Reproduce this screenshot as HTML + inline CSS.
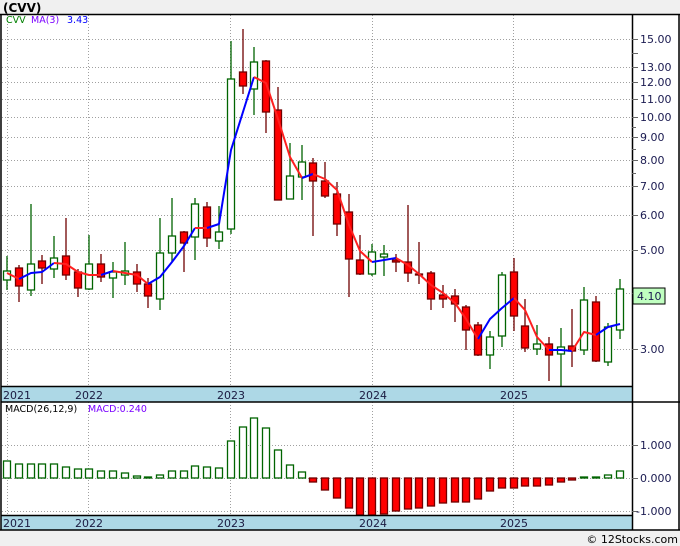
<!DOCTYPE html>
<html><head><meta charset="utf-8"><style>
html,body{margin:0;padding:0;background:#f0f0f0;}
svg{display:block;font-family:"DejaVu Sans","Liberation Sans",sans-serif;}
</style></head><body>
<svg width="680" height="546" viewBox="0 0 680 546" xmlns="http://www.w3.org/2000/svg">
<rect x="0" y="0" width="680" height="546" fill="#f0f0f0"/>
<rect x="1" y="14" width="678" height="516" fill="#fff"/>
<text x="3" y="12" font-size="12" font-weight="bold" fill="#000">(CVV)</text>
<!-- grid -->
<g stroke="#a0a0a0" stroke-dasharray="1,2" stroke-width="1">
<line x1="2" y1="39.5" x2="632" y2="39.5"/><line x1="2" y1="67.5" x2="632" y2="67.5"/><line x1="2" y1="82.5" x2="632" y2="82.5"/>
<line x1="2" y1="99.5" x2="632" y2="99.5"/><line x1="2" y1="117.5" x2="632" y2="117.5"/><line x1="2" y1="137.5" x2="632" y2="137.5"/>
<line x1="2" y1="160.5" x2="632" y2="160.5"/><line x1="2" y1="186.5" x2="632" y2="186.5"/><line x1="2" y1="215.5" x2="632" y2="215.5"/>
<line x1="2" y1="250.5" x2="632" y2="250.5"/><line x1="2" y1="293.5" x2="632" y2="293.5"/><line x1="2" y1="349.5" x2="632" y2="349.5"/>
<line x1="2" y1="445.5" x2="632" y2="445.5"/><line x1="2" y1="478.5" x2="632" y2="478.5"/><line x1="2" y1="511.5" x2="632" y2="511.5"/>
<line x1="7.5" y1="15" x2="7.5" y2="515"/><line x1="88.5" y1="15" x2="88.5" y2="515"/><line x1="230.5" y1="15" x2="230.5" y2="515"/>
<line x1="372.5" y1="15" x2="372.5" y2="515"/><line x1="513.5" y1="15" x2="513.5" y2="515"/>
</g>
<!-- wicks -->
<g stroke-width="1.3">
<g stroke="#006400">
<line x1="7" y1="256" x2="7" y2="290"/><line x1="31" y1="204" x2="31" y2="296"/><line x1="54" y1="236" x2="54" y2="278"/>
<line x1="89" y1="235" x2="89" y2="290"/><line x1="113" y1="262" x2="113" y2="298"/><line x1="125" y1="242" x2="125" y2="285"/>
<line x1="160" y1="218" x2="160" y2="310"/><line x1="172" y1="198" x2="172" y2="262"/><line x1="195" y1="198" x2="195" y2="260"/>
<line x1="219" y1="206" x2="219" y2="249"/><line x1="231" y1="41" x2="231" y2="234"/><line x1="254" y1="47" x2="254" y2="115"/>
<line x1="290" y1="143" x2="290" y2="199"/><line x1="302" y1="145" x2="302" y2="200"/><line x1="372" y1="244" x2="372" y2="276"/>
<line x1="384" y1="245" x2="384" y2="276"/><line x1="490" y1="331" x2="490" y2="369"/><line x1="502" y1="272" x2="502" y2="347"/>
<line x1="537" y1="325" x2="537" y2="355"/><line x1="561" y1="328" x2="561" y2="388"/><line x1="584" y1="287" x2="584" y2="355"/>
<line x1="608" y1="323" x2="608" y2="366"/><line x1="620" y1="279" x2="620" y2="339"/>
</g>
<g stroke="#700000">
<line x1="19" y1="265" x2="19" y2="302"/><line x1="42" y1="255" x2="42" y2="284"/><line x1="66" y1="218" x2="66" y2="280"/>
<line x1="78" y1="269" x2="78" y2="297"/><line x1="101" y1="254" x2="101" y2="282"/><line x1="137" y1="264" x2="137" y2="292"/>
<line x1="148" y1="278" x2="148" y2="308"/><line x1="184" y1="231" x2="184" y2="272"/><line x1="207" y1="202" x2="207" y2="247"/>
<line x1="243" y1="29" x2="243" y2="94"/><line x1="266" y1="60" x2="266" y2="133"/><line x1="278" y1="87" x2="278" y2="200"/>
<line x1="313" y1="158" x2="313" y2="236"/><line x1="325" y1="162" x2="325" y2="198"/><line x1="337" y1="182" x2="337" y2="236"/>
<line x1="349" y1="194" x2="349" y2="297"/><line x1="360" y1="235" x2="360" y2="275"/><line x1="396" y1="254" x2="396" y2="272"/>
<line x1="408" y1="205" x2="408" y2="282"/><line x1="419" y1="242" x2="419" y2="284"/><line x1="431" y1="271" x2="431" y2="310"/>
<line x1="443" y1="285" x2="443" y2="308"/><line x1="455" y1="289" x2="455" y2="322"/><line x1="466" y1="305" x2="466" y2="350"/>
<line x1="478" y1="322" x2="478" y2="356"/><line x1="514" y1="258" x2="514" y2="331"/><line x1="525" y1="299" x2="525" y2="352"/>
<line x1="549" y1="337" x2="549" y2="381"/><line x1="572" y1="309" x2="572" y2="367"/><line x1="596" y1="296" x2="596" y2="362"/>
</g></g>
<!-- up bodies -->
<g fill="#fff" stroke="#006400" stroke-width="1.3">
<rect x="3.5" y="271" width="7" height="9"/><rect x="27.5" y="264" width="7" height="26"/><rect x="50.5" y="258" width="7" height="11"/>
<rect x="85.5" y="264" width="7" height="25"/><rect x="109.5" y="272" width="7" height="6"/><rect x="121.5" y="271" width="7" height="4"/>
<rect x="156.5" y="253" width="7" height="46"/><rect x="168.5" y="236" width="7" height="17"/><rect x="191.5" y="204" width="7" height="33"/>
<rect x="215.5" y="232" width="7" height="9"/><rect x="227.5" y="79" width="7" height="150"/><rect x="250.5" y="62" width="7" height="27"/>
<rect x="286.5" y="176" width="7" height="23"/><rect x="298.5" y="162" width="7" height="15"/><rect x="368.5" y="252" width="7" height="22"/>
<rect x="380.5" y="254" width="7" height="3"/><rect x="486.5" y="337" width="7" height="18"/><rect x="498.5" y="275" width="7" height="61"/>
<rect x="533.5" y="344" width="7" height="5"/><rect x="557.5" y="347" width="7" height="7"/><rect x="580.5" y="300" width="7" height="50"/>
<rect x="604.5" y="327" width="7" height="35"/><rect x="616.5" y="289" width="7" height="41"/>
</g>
<!-- down bodies -->
<g fill="#ff0000" stroke="#700000" stroke-width="1.3">
<rect x="15.5" y="268" width="7" height="18"/><rect x="38.5" y="261" width="7" height="7"/><rect x="62.5" y="256" width="7" height="19"/>
<rect x="74.5" y="272" width="7" height="16"/><rect x="97.5" y="264" width="7" height="13"/><rect x="133.5" y="272" width="7" height="12"/>
<rect x="144.5" y="284" width="7" height="12"/><rect x="180.5" y="232" width="7" height="11"/><rect x="203.5" y="207" width="7" height="31"/>
<rect x="239.5" y="72" width="7" height="14"/><rect x="262.5" y="61" width="7" height="51"/><rect x="274.5" y="110" width="7" height="90"/>
<rect x="309.5" y="163" width="7" height="18"/><rect x="321.5" y="181" width="7" height="15"/><rect x="333.5" y="194" width="7" height="30"/>
<rect x="345.5" y="212" width="7" height="47"/><rect x="356.5" y="260" width="7" height="14"/><rect x="392.5" y="260" width="7" height="2"/>
<rect x="404.5" y="262" width="7" height="11"/><rect x="415.5" y="274" width="7" height="1"/><rect x="427.5" y="273" width="7" height="26"/>
<rect x="439.5" y="295" width="7" height="4"/><rect x="451.5" y="296" width="7" height="8"/><rect x="462.5" y="307" width="7" height="23"/>
<rect x="474.5" y="325" width="7" height="30"/><rect x="510.5" y="272" width="7" height="44"/><rect x="521.5" y="326" width="7" height="22"/>
<rect x="545.5" y="344" width="7" height="11"/><rect x="568.5" y="346" width="7" height="5"/><rect x="592.5" y="302" width="7" height="59"/>
</g>
<!-- MA line -->
<g fill="none" stroke-width="2" stroke-linejoin="round">
<polyline stroke="#ff2020" points="7,273 19,279"/>
<polyline stroke="#0000ff" points="19,279 31,273 42,272 54,263"/>
<polyline stroke="#ff2020" points="54,263 66,264 78,272 89,275 101,275"/>
<polyline stroke="#0000ff" points="101,275 113,271"/>
<polyline stroke="#ff2020" points="113,271 125,273 137,275 148,284"/>
<polyline stroke="#0000ff" points="148,284 160,277 172,262 184,246 195,228"/>
<polyline stroke="#ff2020" points="195,228 207,228"/>
<polyline stroke="#0000ff" points="207,228 219,224 231,150 254,77"/>
<polyline stroke="#ff2020" points="254,77 266,83 278,119 290,157 302,178"/>
<polyline stroke="#0000ff" points="302,178 313,174"/>
<polyline stroke="#ff2020" points="313,174 325,179 337,190 349,225 360,251 372,262"/>
<polyline stroke="#0000ff" points="372,262 384,260 396,258"/>
<polyline stroke="#ff2020" points="396,258 408,265 419,274 431,285 443,293 455,303 466,319 478,339"/>
<polyline stroke="#0000ff" points="478,339 490,319 502,308 514,298"/>
<polyline stroke="#ff2020" points="514,298 525,310 537,337 549,350"/>
<polyline stroke="#0000ff" points="549,350 561,350 572,351"/>
<polyline stroke="#ff2020" points="572,351 584,332 596,335"/>
<polyline stroke="#0000ff" points="596,335 608,327 620,324"/>
</g>
<text x="6" y="23" font-size="9.5" fill="#008000">CVV</text>
<text x="31" y="23" font-size="9.5" fill="#7a00ff">MA(3)</text>
<text x="67" y="23" font-size="9.5" fill="#0000ff">3.43</text>
<!-- MACD bars -->
<g fill="#fff" stroke="#006400" stroke-width="1.3">
<rect x="3.5" y="461" width="7" height="17"/><rect x="15.5" y="464" width="7" height="14"/><rect x="27.5" y="464" width="7" height="14"/>
<rect x="38.5" y="464" width="7" height="14"/><rect x="50.5" y="464" width="7" height="14"/><rect x="62.5" y="467" width="7" height="11"/>
<rect x="74.5" y="469" width="7" height="9"/><rect x="85.5" y="469" width="7" height="9"/><rect x="97.5" y="471" width="7" height="7"/>
<rect x="109.5" y="471" width="7" height="7"/><rect x="121.5" y="473" width="7" height="5"/><rect x="133.5" y="476" width="7" height="2"/>
<rect x="144.5" y="477" width="7" height="1"/><rect x="156.5" y="475" width="7" height="3"/><rect x="168.5" y="471" width="7" height="7"/>
<rect x="180.5" y="471" width="7" height="7"/><rect x="191.5" y="466" width="7" height="12"/><rect x="203.5" y="467" width="7" height="11"/>
<rect x="215.5" y="468" width="7" height="10"/><rect x="227.5" y="441" width="7" height="37"/><rect x="239.5" y="427" width="7" height="51"/>
<rect x="250.5" y="418" width="7" height="60"/><rect x="262.5" y="428" width="7" height="50"/><rect x="274.5" y="450" width="7" height="28"/>
<rect x="286.5" y="465" width="7" height="13"/><rect x="298.5" y="472" width="7" height="6"/>
<rect x="580.5" y="477" width="7" height="1"/><rect x="592.5" y="477" width="7" height="1"/><rect x="604.5" y="475" width="7" height="3"/>
<rect x="616.5" y="471" width="7" height="7"/>
</g>
<g fill="#ff0000" stroke="#700000" stroke-width="1.3">
<rect x="309.5" y="478" width="7" height="4"/><rect x="321.5" y="478" width="7" height="12"/><rect x="333.5" y="478" width="7" height="20"/>
<rect x="345.5" y="478" width="7" height="30"/><rect x="356.5" y="478" width="7" height="37"/><rect x="368.5" y="478" width="7" height="37"/>
<rect x="380.5" y="478" width="7" height="36"/><rect x="392.5" y="478" width="7" height="33"/><rect x="404.5" y="478" width="7" height="31"/>
<rect x="415.5" y="478" width="7" height="30"/><rect x="427.5" y="478" width="7" height="28"/><rect x="439.5" y="478" width="7" height="25"/>
<rect x="451.5" y="478" width="7" height="24"/><rect x="462.5" y="478" width="7" height="24"/><rect x="474.5" y="478" width="7" height="21"/>
<rect x="486.5" y="478" width="7" height="13"/><rect x="498.5" y="478" width="7" height="10"/><rect x="510.5" y="478" width="7" height="10"/>
<rect x="521.5" y="478" width="7" height="8"/><rect x="533.5" y="478" width="7" height="8"/><rect x="545.5" y="478" width="7" height="7"/>
<rect x="557.5" y="478" width="7" height="4"/><rect x="568.5" y="478" width="7" height="2"/>
</g>
<text x="5" y="412" font-size="9.5" fill="#000">MACD(26,12,9)</text>
<text x="88" y="412" font-size="9.5" fill="#7a00ff">MACD:0.240</text>
<!-- axis strips -->
<rect x="1" y="386" width="631" height="16" fill="#add8e6"/>
<rect x="1" y="515" width="631" height="15" fill="#add8e6"/>
<g stroke="#000" stroke-width="1.5">
<line x1="0" y1="14.5" x2="680" y2="14.5"/><line x1="1" y1="14" x2="1" y2="530"/><line x1="679" y1="14" x2="679" y2="530"/>
<line x1="632.5" y1="14" x2="632.5" y2="530"/><line x1="1" y1="386.5" x2="632" y2="386.5"/><line x1="1" y1="402" x2="680" y2="402"/>
<line x1="1" y1="515.5" x2="632" y2="515.5"/><line x1="0" y1="530" x2="680" y2="530"/>
</g>
<g font-size="11" fill="#1a1a40">
<text x="3" y="399">2021</text><text x="75" y="399">2022</text><text x="217" y="399">2023</text><text x="359" y="399">2024</text><text x="500" y="399">2025</text>
<text x="3" y="527">2021</text><text x="75" y="527">2022</text><text x="217" y="527">2023</text><text x="359" y="527">2024</text><text x="500" y="527">2025</text>
</g>
<!-- right axis -->
<g stroke="#666" stroke-width="1">
<line x1="632" y1="39.5" x2="638" y2="39.5"/><line x1="632" y1="53.5" x2="638" y2="53.5"/><line x1="632" y1="67.5" x2="638" y2="67.5"/>
<line x1="632" y1="82.5" x2="638" y2="82.5"/><line x1="632" y1="99.5" x2="638" y2="99.5"/><line x1="632" y1="117.5" x2="638" y2="117.5"/>
<line x1="632" y1="127.5" x2="636" y2="127.5"/><line x1="632" y1="137.5" x2="638" y2="137.5"/><line x1="632" y1="149.5" x2="636" y2="149.5"/>
<line x1="632" y1="160.5" x2="638" y2="160.5"/><line x1="632" y1="173.5" x2="636" y2="173.5"/><line x1="632" y1="186.5" x2="638" y2="186.5"/>
<line x1="632" y1="215.5" x2="638" y2="215.5"/><line x1="632" y1="250.5" x2="638" y2="250.5"/><line x1="632" y1="293.5" x2="638" y2="293.5"/>
<line x1="632" y1="349.5" x2="638" y2="349.5"/><line x1="632" y1="445.5" x2="638" y2="445.5"/><line x1="632" y1="478.5" x2="638" y2="478.5"/>
<line x1="632" y1="511.5" x2="638" y2="511.5"/>
</g>
<g font-size="11" fill="#1a1a50">
<text x="640" y="43">15.00</text><text x="640" y="71">13.00</text><text x="640" y="86">12.00</text><text x="640" y="103">11.00</text>
<text x="640" y="121">10.00</text><text x="640" y="141">9.00</text><text x="640" y="164">8.00</text><text x="640" y="190">7.00</text>
<text x="640" y="219">6.00</text><text x="640" y="254">5.00</text><text x="640" y="353">3.00</text>
<text x="640" y="449">1.000</text><text x="640" y="482">0.000</text><text x="636" y="515">-1.000</text>
</g>
<rect x="633" y="288" width="32" height="16" fill="#c0ffc0" stroke="#000" stroke-width="1"/>
<text x="637" y="300" font-size="11" fill="#1a1a50">4.10</text>
<rect x="0" y="531" width="680" height="15" fill="#f0f0f0"/>
<text x="678" y="543" font-size="11" fill="#000" text-anchor="end">© 12Stocks.com</text>
</svg>
</body></html>
